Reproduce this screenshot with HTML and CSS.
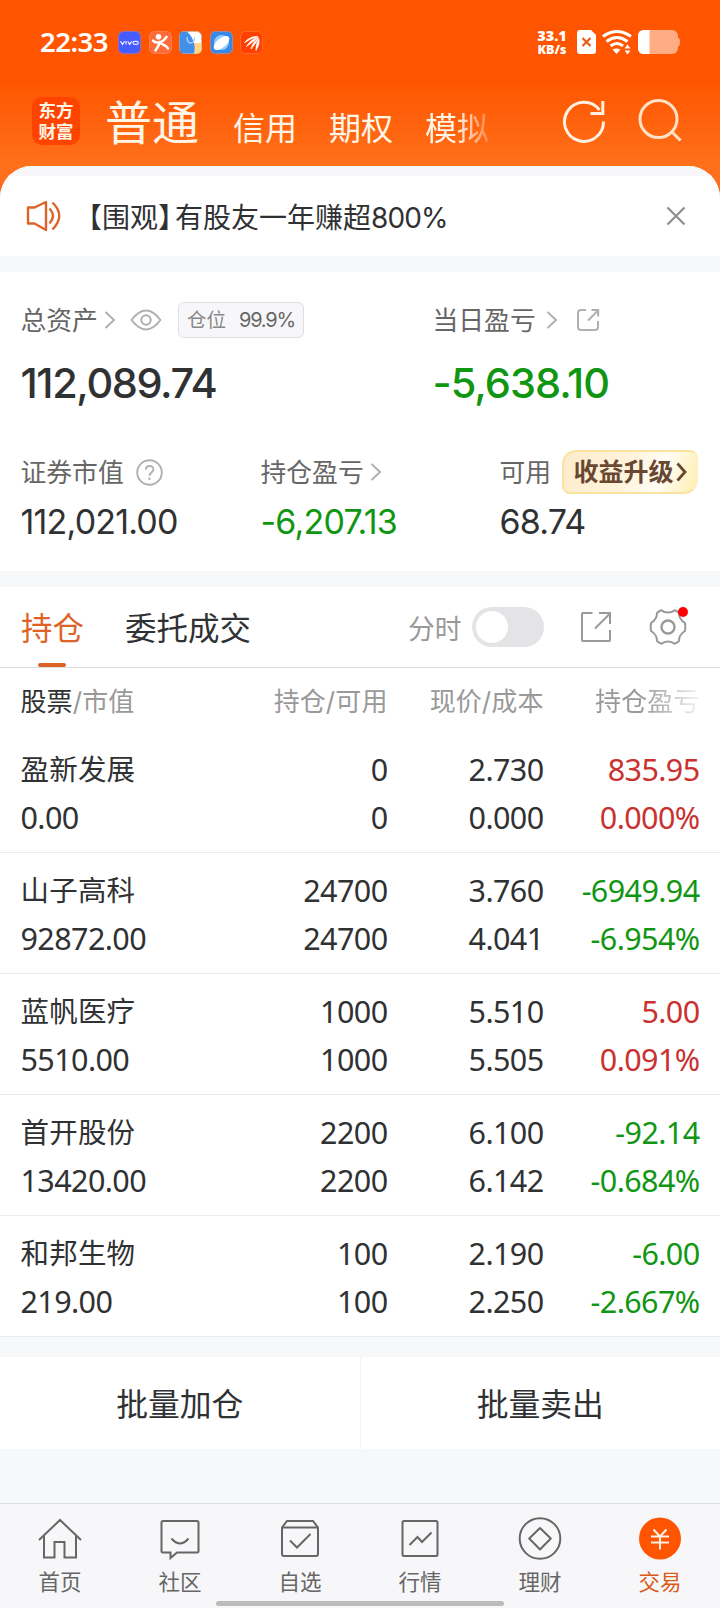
FILE: index.html
```
<!DOCTYPE html>
<html lang="zh-CN">
<head>
<meta charset="utf-8">
<title>交易</title>
<link rel="stylesheet" href="styles.css">
</head>
<body>
<header class="top">
  <div class="status">
    <span class="clock">22:33</span>
    <div class="apps">
      <svg width="23" height="23" viewBox="0 0 23 23"><rect x=".5" y=".5" width="22" height="22" rx="5" fill="#465cff" stroke="#8b70c8"/><g fill="none" stroke="#fff" stroke-width="1.1"><path d="M2.5 10.2l2 3.3 2-3.3M8 10v3.6M9.7 10.2l2 3.3 2-3.3"/><rect x="15" y="10.3" width="5.2" height="3" rx="1.4"/></g></svg>
      <svg width="23" height="23" viewBox="0 0 23 23"><rect x=".5" y=".5" width="22" height="22" rx="5" fill="#ff6b38" stroke="#ff8050"/><circle cx="9.5" cy="5.800" r="2.8" fill="#fff"/><path d="M4 9.5c2 3 5 2 7.500 1.500 3-.5 4-3 6-5M10.500 11c0 4-2 5-4 8.500M11 11.500c2 2.500 6 2 8 6" fill="none" stroke="#fff" stroke-width="2.500" stroke-linecap="round"/></svg>
      <svg width="23" height="23" viewBox="0 0 23 23"><rect x=".5" y=".5" width="22" height="22" rx="5" fill="#fff" stroke="#d8b093"/><path d="M15 12h7.500v6q0 4.500-4.500 4.500h-5z" fill="#ffd58b"/><path d="M8 .5C14 6 17 14 15 22.500H5Q.5 22.500.5 18V5Q.5.5 5 .5z" fill="#438ee8"/><path d="M8 6c0 8 8 8 7.500 0" fill="none" stroke="#a9d7ff" stroke-width="1.300"/></svg>
      <svg width="23" height="23" viewBox="0 0 23 23"><rect x=".5" y=".5" width="22" height="22" rx="5" fill="#3988e5" stroke="#9b8ba8"/><circle cx="11.500" cy="11.500" r="7.500" fill="#8dccff"/><ellipse cx="11.500" cy="12" rx="9.500" ry="4.700" transform="rotate(-40 11.500 12)" fill="#fff"/></svg>
      <svg width="23" height="23" viewBox="0 0 23 23"><rect x=".5" y=".5" width="22" height="22" rx="5" fill="#ff4000" stroke="#ff6830"/><path d="M4.500 11.500Q10 5 18 5.500 10.500 7.500 4.500 11.500zM6.500 15.500Q11 8 18.300 6.500 13.500 10.500 6.500 15.500zM11 18Q13 10.500 18.600 7.500 16 12 11 18zM16 19.500Q15.500 13 19 8.500 20 13 16 19.500z" fill="#fff" stroke="#fff" stroke-width=".8" stroke-linejoin="round"/></svg>
    </div>
    <div class="speed"><b>33.1</b><b class="unit">KB/s</b></div>
    <svg class="sim" width="19" height="24" viewBox="0 0 19 24"><path d="M3 0h11l5 5v16q0 3-3 3H3q-3 0-3-3V3q0-3 3-3z" fill="#fff"/><path d="M5.500 8l8 8m0-8l-8 8" stroke="#e85a18" stroke-width="2.200"/></svg>
    <svg class="wifi" width="30" height="25" viewBox="0 0 30 25"><g fill="none" stroke="#fff" stroke-width="3"><path d="M1 6.500Q15-3.500 29 6.500M4.500 11.500Q15 3.500 25.500 11.500M8.500 16Q15 11 21 16"/></g><path d="M10.500 19.500Q14.500 17.500 18.500 19.500L14.500 24zM22.500 18.500l3-4 3 4zM22.500 20.500h6l-3 4z" fill="#fff"/></svg>
    <svg class="battery" width="42" height="24" viewBox="0 0 42 24"><rect width="40" height="24" rx="6" fill="#ffac84"/><path d="M6 0h5.500v24H6q-6 0-6-6V6q0-6 6-6z" fill="#fff"/><path d="M40 8h1q1 1 1 4t-1 4h-1z" fill="#ffac84"/></svg>
  </div>
  <nav class="accounts">
    <div class="logo"><span>东方</span><span>财富</span></div>
    <div class="kinds">
      <span class="current">普通</span><span>信用</span><span>期权</span><span class="fade">模拟</span>
    </div>
    <svg class="refresh" width="44" height="44" viewBox="0 0 44 44" fill="none" stroke="#fff1df" stroke-width="3"><path d="M41.500 22.500A19.500 19.500 0 1 1 37.500 11M28.500 14.500h12.300V2"/></svg>
    <svg class="search" width="44" height="44" viewBox="0 0 44 44" fill="none" stroke="#ffe2c6" stroke-width="3"><circle cx="20.500" cy="20" r="18.500"/><path d="M33 32l9.500 9.500"/></svg>
  </nav>
</header>
<main>
  <section class="notice">
    <svg width="36" height="32" viewBox="0 0 36 32" fill="none" stroke="#dc6428" stroke-width="2.400"><path d="M2 7.500h6.500L20 2v28L8.500 23.500H2zM23.500 8.500q7 7.500 0 15M26.500 2.500q13.500 13 0 27" stroke-linejoin="round"/></svg>
    <p><span class="bracket">【围观】</span><span>有股友一年赚超</span><span class="num">800%</span></p>
    <svg class="close" width="20" height="20" viewBox="0 0 20 20"><path d="M1.500 1.500l17 17m0-17l-17 17" stroke="#8c8c91" stroke-width="2.100"/></svg>
  </section>
  <section class="assets">
    <div class="total">
      <div class="label"><span>总资产</span><svg class="chev" width="12" height="18" viewBox="0 0 12 18"><path d="M1.500 1l8.500 8-8.500 8"/></svg><svg class="eye" width="32" height="22" viewBox="0 0 32 22" fill="none" stroke="#afafaf" stroke-width="2"><path d="M1.500 11Q16-8 30.500 11 16 30 1.500 11z" stroke-linejoin="round"/><circle cx="16" cy="11" r="4.700"/></svg><div class="pill"><span>仓位</span><span class="num">99.9%</span></div></div>
      <div class="big">112,089.74</div>
    </div>
    <div class="today">
      <div class="label"><span>当日盈亏</span><svg class="chev gap" width="12" height="18" viewBox="0 0 12 18"><path d="M1.500 1l8.500 8-8.500 8"/></svg><svg class="share" width="24" height="24" viewBox="0 0 24 24" fill="none" stroke="#b0b0b0" stroke-width="2"><path d="M10 2H5Q2 2 2 5v14q0 3 3 3h14q3 0 3-3v-6M12 12.500L22 2.500M15.500 2h6.700v6.500"/></svg></div>
      <div class="big down">-5,638.10</div>
    </div>
    <div class="cell">
      <div class="label"><span>证券市值</span><svg class="help" width="27" height="27" viewBox="0 0 27 27" fill="none" stroke="#b0b0b0" stroke-width="1.900"><circle cx="13.500" cy="13.500" r="12.300"/><path d="M9.800 10.800q0-3.800 3.800-3.800t3.800 3.500c0 2.500-3.800 3.200-3.800 6.300M13.500 18.500V21"/></svg></div>
      <div class="mid">112,021.00</div>
    </div>
    <div class="cell profit">
      <div class="label"><span>持仓盈亏</span><svg class="chev" width="12" height="18" viewBox="0 0 12 18"><path d="M1.500 1l8.500 8-8.500 8"/></svg></div>
      <div class="mid down">-6,207.13</div>
    </div>
    <div class="cell">
      <div class="label"><span>可用</span><div class="upgrade"><span>收益升级</span><svg width="12" height="20" viewBox="0 0 12 20"><path d="M1.500 1.500l7.500 8.500-7.500 8.500" fill="none" stroke="#694832" stroke-width="2.800"/></svg></div></div>
      <div class="mid">68.74</div>
    </div>
  </section>
  <section class="tabs">
    <span class="tab active">持仓</span><span class="tab">委托成交</span>
    <span class="minute">分时</span><span class="switch"></span>
    <svg class="export" width="32" height="32" viewBox="0 0 32 32" fill="none" stroke="#999" stroke-width="2"><path d="M12.500 2H3Q2 2 2 3v26q0 1 1 1h26q1 0 1-1V19M15 17.500L30 2.500M19 2h11v11"/></svg>
    <svg class="gear" width="40" height="40" viewBox="0 0 40 40" fill="none" stroke="#999" stroke-width="2"><path d="M9 6Q11 4 13.500 3.300 16 5.600 20 5.600T26.500 3.300Q29 4 31 6 31 12.500 37 16 37.700 20 37 24 31 27.500 31 34 29 36 26.500 36.700 24 34.400 20 34.400T13.500 36.700Q11 36 9 34 9 27.500 3 24 2.300 20 3 16 9 12.500 9 6z" stroke-linejoin="round"/><circle cx="20" cy="20" r="6.500" stroke-width="2.400"/><circle cx="35" cy="5" r="5" fill="#f00" stroke="none"/></svg>
  </section>
  <section class="table">
    <div class="row head"><span><em>股票</em>/市值</span><span>持仓/可用</span><span>现价/成本</span><span class="cut">持仓盈亏</span></div>
    <div class="row"><span class="name">盈新发展</span><span>0</span><span>2.730</span><span class="up">835.95</span><span>0.00</span><span>0</span><span>0.000</span><span class="up">0.000%</span></div>
    <div class="row"><span class="name">山子高科</span><span>24700</span><span>3.760</span><span class="down">-6949.94</span><span>92872.00</span><span>24700</span><span>4.041</span><span class="down">-6.954%</span></div>
    <div class="row"><span class="name">蓝帆医疗</span><span>1000</span><span>5.510</span><span class="up">5.00</span><span>5510.00</span><span>1000</span><span>5.505</span><span class="up">0.091%</span></div>
    <div class="row"><span class="name">首开股份</span><span>2200</span><span>6.100</span><span class="down">-92.14</span><span>13420.00</span><span>2200</span><span>6.142</span><span class="down">-0.684%</span></div>
    <div class="row"><span class="name">和邦生物</span><span>100</span><span>2.190</span><span class="down">-6.00</span><span>219.00</span><span>100</span><span>2.250</span><span class="down">-2.667%</span></div>
  </section>
  <section class="batch"><span>批量加仓</span><span>批量卖出</span></section>
</main>
<footer class="bar">
  <a><svg width="44" height="44" viewBox="0 0 44 44"><path d="M1 23L22 3l21 20M6 19v21.500h10.500V25h10v15.500H38V19"/></svg>首页</a>
  <a><svg width="44" height="44" viewBox="0 0 44 44"><path d="M5 4h34q1.500 0 1.500 1.500V34q0 1.500-1.500 1.500H19L12.500 41v-5.500H5q-1.500 0-1.500-1.500V5.500Q3.500 4 5 4zM13.500 21.500q8.500 10 17 0"/></svg>社区</a>
  <a><svg width="44" height="44" viewBox="0 0 44 44"><path d="M4 10.500L9 4h26l5 6.500V37q0 2-2 2H6q-2 0-2-2zh36M12 23.500l7 7L32.500 17"/></svg>自选</a>
  <a><svg width="44" height="44" viewBox="0 0 44 44"><rect x="4.500" y="4" width="35" height="35" rx="1.500"/><path d="M11.500 28l8-8 4.500 5 9.500-9.500"/></svg>行情</a>
  <a><svg width="44" height="44" viewBox="0 0 44 44"><circle cx="22" cy="21.500" r="20.300"/><path d="M22 11l10.800 10.500L22 32.500 11.200 21.500z" stroke-linejoin="round"/></svg>理财</a>
  <a class="on"><svg width="44" height="44" viewBox="0 0 44 44"><circle cx="22" cy="21.500" r="21" fill="#ff5500" stroke="none"/><path d="M15.500 12.500l6.500 7 6.500-7M13 19.500h18M13 25.500h18M22 19.500v13" stroke="#fff0e5"/></svg>交易</a>
  <i class="home"></i>
</footer>
</body>
</html>
```
FILE: styles.css
```
* { box-sizing: border-box; }
body {
  margin: 0; width: 720px; height: 1608px; overflow: hidden;
  display: flex; flex-direction: column;
  background: #f7f8fa; color: #303133;
  font-family: Inter, "Noto Sans CJK SC", sans-serif;
}
svg { display: block; flex: none; }
p { margin: 0; }
em { font-style: normal; color: #303133; }

.top {
  height: 198px; flex: none; margin-bottom: -32px;
  background: linear-gradient(#ff5500 80px, #ff701b 166px, #ff6820);
}
.status { height: 84px; padding: 0 40px; display: flex; align-items: center; color: #fff; }
.clock { font: 600 27.5px/28px "Noto Sans", sans-serif; width: 78px; letter-spacing: -.5px; }
.apps { display: flex; gap: 7.5px; flex: 1; }
.speed { width: 28px; margin-right: 11px; font: 700 14.5px/14px "Noto Sans", sans-serif; white-space: nowrap; display: flex; flex-direction: column; align-items: center; gap: 1px; }
.speed .unit { font-size: 12.500px; line-height: 13px; }
.wifi { margin-left: 6px; }
.battery { margin-left: 6px; }

.accounts { height: 82px; display: flex; align-items: flex-start; padding: 13px 38px 0 32px; color: #fff6e8; }
.logo {
  width: 48px; height: 48px; border-radius: 10px; background: #ff4400;
  font: 700 17.5px/20px "Noto Sans CJK SC", sans-serif; white-space: nowrap;
  display: flex; flex-direction: column; align-items: center; padding-top: 3px; gap: 1px;
}
.kinds { display: flex; align-items: baseline; gap: 32px; margin: -9px 0 0 25px; font-size: 32px; line-height: 70px; width: 458px; white-space: nowrap; }
.current { font-size: 47px; margin-right: 2px; }
.fade { -webkit-mask-image: linear-gradient(90deg, #000 50%, transparent 115%); mask-image: linear-gradient(90deg, #000 50%, transparent 115%); }
.refresh { margin-top: 2px; }
.search { margin: 2px 0 0 32px; }

main { flex: none; border-radius: 32px 32px 0 0; overflow: hidden; background: #f7f8fa; }
.notice {
  height: 90px; padding: 10px 34px 0 26px; display: flex; align-items: center;
  background: linear-gradient(#f7f7f9 10px, #fff 10px); font-size: 28px;
}
.notice p { flex: 1; margin: 0 0 0 26px; display: flex; align-items: baseline; white-space: nowrap; }
.bracket { font-family: "Noto Sans CJK SC", sans-serif; font-feature-settings: "halt"; margin-right: 3px; }
.notice .num { letter-spacing: -.9px; }

.assets {
  height: 299px; margin-top: 16px; padding: 24px 21px 0 20.500px; background: #fff;
  display: grid; grid-template-columns: 240px 172px 67px 1fr; grid-template-rows: 152px 120px;
}
.total { grid-column: 1 / 3; }
.today { grid-column: 3 / 5; }
.profit { grid-column: 2 / 4; }
.label { height: 44px; display: flex; align-items: center; color: #666; font-size: 25.8px; white-space: nowrap; }
.label > svg, .label > div { position: relative; top: 2px; }
.chev { fill: none; stroke: #b0b0b0; stroke-width: 2; margin-left: 6px; }
.chev.gap { margin-left: 10px; }
.eye { margin-left: 14px; }
.pill {
  margin-left: 16px; height: 36px; width: 126px; padding: 0 8px; border: 1px solid #dfdfe3; border-radius: 6px;
  background: #f7f7f9; color: #888; font-size: 19.500px; line-height: 32px; display: flex; align-items: center; justify-content: space-between;
}
.pill .num { font-size: 20px; color: #666; letter-spacing: -1.200px; }
.share { margin-left: 18px; }
.big { font-size: 41.500px; font-weight: 500; line-height: 50px; margin-top: 18px; letter-spacing: -1.400px; }
.big.down { letter-spacing: -1px; }
.mid { font-size: 34px; line-height: 42px; margin-top: 9px; letter-spacing: -.8px; }
.down { color: #119614; }
.up { color: #c93230; }
.help { margin-left: 12px; }
.upgrade {
  margin-left: 10.500px; width: 136px; height: 44px; padding-left: 10px; gap: 2px; display: flex; align-items: center; flex: none; line-height: 38px;
  border: 2px solid #f9e59f; border-color: #f9e59f #fdf0bd #f9e59f #f9e59f; border-radius: 14px 8px 14px 8px; color: #694832; font-weight: 700; font-size: 25px;
  background: linear-gradient(110deg, #fdeccc, #fff4dd 50%, #fffdf5 72%, #ffeeb0);
}

.tabs { height: 81px; margin-top: 16px; padding-left: 21px; background: #fff; border-bottom: 1px solid #dcdcdc; display: flex; align-items: center; font-size: 31.500px; }
.tab { height: 80px; line-height: 84px; margin-right: 41px; width: 63px; white-space: nowrap; }
.tab + .tab { width: 126px; margin-right: 157px; }
.active { color: #dc6428; display: grid; grid-template-rows: 80px 0; }
.active::after { content: ""; width: 28px; height: 4px; border-radius: 2px; background: #dc6428; margin: -4px 0 0 17px; }
.minute { font-size: 26.800px; color: #999; width: 64px; }
.switch { width: 72px; height: 40px; border-radius: 20px; background: #e4e4e6; padding: 4px; }
.switch::before { content: ""; display: block; width: 32px; height: 32px; border-radius: 50%; background: #fff; }
.export { margin-left: 36px; }
.gear { margin-left: 36px; }

.row {
  height: 121px; padding: 13px 20px 0 20.500px; border-bottom: 1px solid #ebebeb; background: #fff;
  display: grid; grid-template-columns: 211px 156px 156px 156px; grid-auto-rows: 48px; align-content: start;
  font: 30.500px/48px "Noto Sans", "Noto Sans CJK SC", sans-serif; letter-spacing: -.6px; text-align: right; white-space: nowrap;
}
.row > :nth-child(4n+1) { text-align: left; }
.row .name { font-size: 28.500px; letter-spacing: .2px; }
.row.head { height: 64px; padding-top: 10px; border: 0; font: 26px/48px Inter, "Noto Sans CJK SC", sans-serif; color: #999; letter-spacing: .1px; }
.cut { -webkit-mask-image: linear-gradient(90deg, #000 62%, transparent 105%); mask-image: linear-gradient(90deg, #000 62%, transparent 105%); }

.batch { margin-top: 20px; height: 92px; background: #fff; display: flex; font-size: 31.800px; line-height: 95px; text-align: center; }
.batch span { flex: 1; }
.batch span:first-child { border-right: 1px solid #f3f3f5; }

.bar {
  margin-top: 54px; height: 105px; flex: none; border-top: 1px solid #dfdfe1; background: #f7f7f9;
  display: flex; position: relative; color: #666; font-size: 21.500px; line-height: 30px;
}
.bar a { flex: 1; display: flex; flex-direction: column; align-items: center; padding-top: 13px; gap: 6px; }
.bar svg { fill: none; stroke: #666; stroke-width: 2; }
.bar .on { color: #dc5a18; }
.home { position: absolute; left: 216px; bottom: 2px; width: 288px; height: 5px; border-radius: 3px; background: #bcbcbc; }
```
